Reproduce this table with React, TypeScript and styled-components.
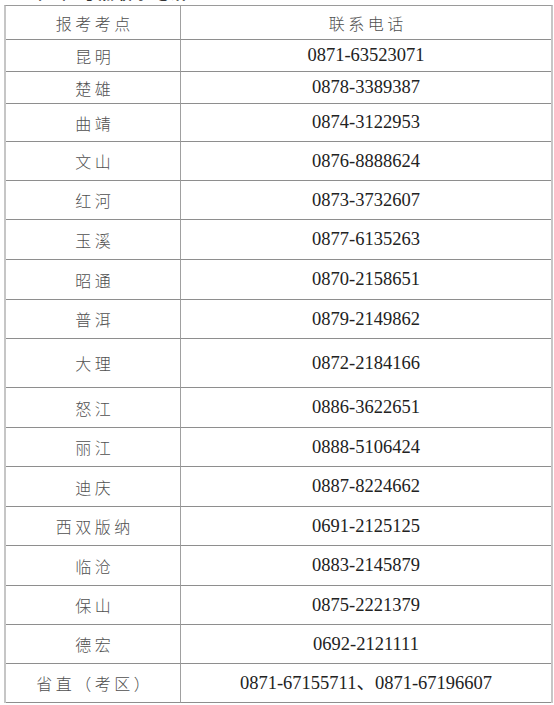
import React from 'react';
import styled, { createGlobalStyle } from 'styled-components';

const GlobalStyle = createGlobalStyle`
  html, body {
    margin: 0;
    padding: 0;
    background: #ffffff;
  }
  body {
    font-family: "Liberation Serif", "Noto Sans CJK SC", serif;
  }
`;

const Page = styled.div`
  width: 554px;
  height: 705px;
  overflow: hidden;
  background: #fff;
`;

// Überschrift, die oben abgeschnitten ist
const Heading = styled.div`
  height: 20px;
  margin-top: -18px;
  margin-left: 26px;
  font-family: "Noto Sans CJK SC", sans-serif;
  font-size: 16px;
  line-height: 20px;
  font-weight: 700;
  color: #333;
  letter-spacing: 2px;
`;

const Table = styled.div`
  display: grid;
  grid-template-columns: 175px 1fr;
  width: 545px;
  margin: 3px 0 0 4px;
  border-left: 2px solid #c6c6c6;
  border-right: 2px solid #c6c6c6;
  border-top: 1px solid #9a9a9a;
  box-sizing: content-box;
`;

const Cell = styled.div<{ $h: number; $first?: boolean }>`
  height: ${(p) => p.$h - 1}px;
  display: flex;
  align-items: center;
  justify-content: center;
  border-bottom: 1px solid #8e8e8e;
  border-right: ${(p) => (p.$first ? '1px solid #a0a0a0' : 'none')};
`;

const Place = styled.span`
  font-family: "Noto Sans CJK SC", sans-serif;
  font-size: 16px;
  font-weight: 300;
  letter-spacing: 3.5px;
  margin-right: -3.5px;
  color: #505050;
  line-height: 1;
`;

const Phone = styled.span`
  font-family: "Liberation Serif", "Noto Sans CJK SC", serif;
  font-size: 18.5px;
  color: #222;
  line-height: 1;
`;

const rows: { place: string; phone: string; h: number }[] = [
  { place: '昆明', phone: '0871-63523071', h: 32 },
  { place: '楚雄', phone: '0878-3389387', h: 32 },
  { place: '曲靖', phone: '0874-3122953', h: 38 },
  { place: '文山', phone: '0876-8888624', h: 39 },
  { place: '红河', phone: '0873-3732607', h: 39 },
  { place: '玉溪', phone: '0877-6135263', h: 40 },
  { place: '昭通', phone: '0870-2158651', h: 40 },
  { place: '普洱', phone: '0879-2149862', h: 39 },
  { place: '大理', phone: '0872-2184166', h: 49 },
  { place: '怒江', phone: '0886-3622651', h: 40 },
  { place: '丽江', phone: '0888-5106424', h: 39 },
  { place: '迪庆', phone: '0887-8224662', h: 40 },
  { place: '西双版纳', phone: '0691-2125125', h: 39 },
  { place: '临沧', phone: '0883-2145879', h: 40 },
  { place: '保山', phone: '0875-2221379', h: 39 },
  { place: '德宏', phone: '0692-2121111', h: 39 },
  { place: '省直（考区）', phone: '0871-67155711、0871-67196607', h: 39 },
];

const App = () => (
  <>
    <GlobalStyle />
    <Page>
      <Heading>（三）考点联系电话</Heading>
      <Table>
        <Cell $h={34} $first>
          <Place>报考考点</Place>
        </Cell>
        <Cell $h={34}>
          <Place>联系电话</Place>
        </Cell>
        {rows.map((r) => (
          <React.Fragment key={r.place}>
            <Cell $h={r.h} $first>
              <Place>{r.place}</Place>
            </Cell>
            <Cell $h={r.h}>
              <Phone>{r.phone}</Phone>
            </Cell>
          </React.Fragment>
        ))}
      </Table>
    </Page>
  </>
);

export default App;
